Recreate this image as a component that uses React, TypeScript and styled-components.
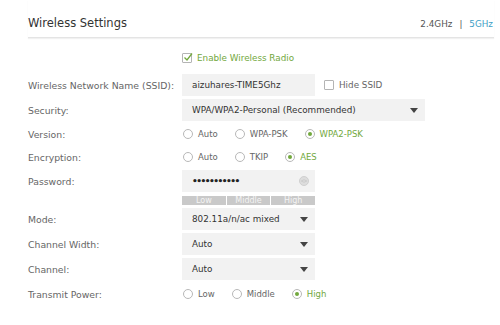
import styled, { createGlobalStyle } from 'styled-components';

const GlobalStyle = createGlobalStyle`
  html, body {
    margin: 0;
    padding: 0;
    background: #fff;
  }
  body {
    font-family: "DejaVu Sans", Verdana, sans-serif;
    color: #555;
  }
`;

const GREEN = '#72a83d';

const Page = styled.div`
  width: 500px;
  height: 325px;
  box-sizing: border-box;
  padding: 0 6px 0 28px;
  overflow: hidden;
`;

const Header = styled.div`
  display: flex;
  justify-content: space-between;
  align-items: flex-end;
  height: 38px;
  box-sizing: border-box;
  padding: 0 1px 7px 0;
  border-bottom: 1px solid #e4e4e4;
  box-shadow: 0 1px 1px #f1f1f1;
`;

const Title = styled.div`
  font-size: 11.5px;
  line-height: 14px;
  color: #333;
`;

const Bands = styled.div`
  display: flex;
  gap: 7px;
  font-size: 8.8px;
  line-height: 12px;
  color: #555;
`;

const Band = styled.span<{ $active?: boolean }>`
  color: ${p => (p.$active ? '#3d9fc6' : '#555')};
`;

const Form = styled.div`
  display: flex;
  flex-direction: column;
  gap: 3px;
  margin-top: 10px;
`;

const Row = styled.div<{ $h?: number; $mt?: number; $mb?: number }>`
  display: flex;
  align-items: center;
  height: ${p => p.$h ?? 22}px;
  margin-top: ${p => p.$mt ?? 0}px;
  margin-bottom: ${p => p.$mb ?? 0}px;
`;

const Label = styled.div`
  width: 154px;
  flex-shrink: 0;
  font-size: 9.3px;
  color: #666;
`;

const Controls = styled.div`
  display: flex;
  align-items: center;
  gap: 9px;
`;

const Field = styled.div<{ $w: number }>`
  position: relative;
  display: flex;
  align-items: center;
  width: ${p => p.$w}px;
  height: 22px;
  box-sizing: border-box;
  padding: 0 10px;
  background: #f2f2f2;
  font-size: 8.8px;
  color: #333;
`;

const Arrow = styled.span`
  position: absolute;
  right: 7px;
  top: 9px;
  width: 0;
  height: 0;
  border-left: 4px solid transparent;
  border-right: 4px solid transparent;
  border-top: 5px solid #444;
`;

const Dots = styled.span`
  font-size: 9px;
  letter-spacing: -1.5px;
  color: #222;
  font-weight: bold;
`;

const Eye = styled.span`
  position: absolute;
  right: 6px;
  top: 6px;
  width: 10px;
  height: 10px;
  border-radius: 50%;
  background: #ddd;
  border: 1px solid #d0d0d0;
  box-sizing: border-box;
  display: flex;
  align-items: center;
  justify-content: center;
`;

const Box = styled.span`
  position: relative;
  width: 10px;
  height: 10px;
  box-sizing: border-box;
  border: 1px solid #b4b4b4;
  background: #fff;
  flex-shrink: 0;
  border-radius: 1px;
`;

const Check = styled.label<{ $on?: boolean }>`
  display: flex;
  align-items: center;
  gap: 5px;
  font-size: 8.8px;
  color: ${p => (p.$on ? GREEN : '#666')};
`;

const RadioGroup = styled.div`
  display: flex;
  align-items: center;
`;

const Option = styled.label<{ $on?: boolean }>`
  display: flex;
  align-items: center;
  gap: 5px;
  margin-right: 16px;
  margin-left: 1px;
  font-size: 8.5px;
  color: ${p => (p.$on ? GREEN : '#666')};
`;

const Dot = styled.span<{ $on?: boolean }>`
  width: 10px;
  height: 10px;
  box-sizing: border-box;
  border-radius: 50%;
  border: 1px solid #b8b8b8;
  background: #fff;
  display: flex;
  align-items: center;
  justify-content: center;
  flex-shrink: 0;
  &::after {
    content: '';
    display: ${p => (p.$on ? 'block' : 'none')};
    width: 4px;
    height: 4px;
    border-radius: 50%;
    background: ${GREEN};
  }
`;

const Strength = styled.div`
  display: flex;
  width: 133px;
  height: 9px;
  gap: 1px;
`;

const Level = styled.div`
  flex: 1;
  background: #c9c9c9;
  color: #f4f4f4;
  font-size: 8px;
  line-height: 9px;
  text-align: center;
`;

const Radios = ({ items, on }: { items: string[]; on: string }) => (
  <RadioGroup>
    {items.map(i => (
      <Option key={i} $on={i === on}>
        <Dot $on={i === on} />
        {i}
      </Option>
    ))}
  </RadioGroup>
);

const Select = ({ w, value }: { w: number; value: string }) => (
  <Field $w={w}>
    {value}
    <Arrow />
  </Field>
);

export default function App() {
  return (
    <>
      <GlobalStyle />
      <Page>
        <Header>
          <Title>Wireless Settings</Title>
          <Bands>
            <Band>2.4GHz</Band>
            <Band>|</Band>
            <Band $active>5GHz</Band>
          </Bands>
        </Header>
        <Form>
          <Row $h={20} $mb={3}>
            <Label />
            <Check $on>
              <Box>
                <svg width="10" height="10" viewBox="0 0 10 10" style={{ position: 'absolute', left: 0, top: -2 }}>
                  <path d="M1.5 5.5 L4 8 L9 1.5" fill="none" stroke={GREEN} strokeWidth="1.3" />
                </svg>
              </Box>
              Enable Wireless Radio
            </Check>
          </Row>
          <Row>
            <Label>Wireless Network Name (SSID):</Label>
            <Controls>
              <Field $w={133}>aizuhares-TIME5Ghz</Field>
              <Check>
                <Box />
                Hide SSID
              </Check>
            </Controls>
          </Row>
          <Row>
            <Label>Security:</Label>
            <Select w={243} value="WPA/WPA2-Personal (Recommended)" />
          </Row>
          <Row $h={20}>
            <Label>Version:</Label>
            <Radios items={['Auto', 'WPA-PSK', 'WPA2-PSK']} on="WPA2-PSK" />
          </Row>
          <Row $h={20}>
            <Label>Encryption:</Label>
            <Radios items={['Auto', 'TKIP', 'AES']} on="AES" />
          </Row>
          <Row>
            <Label>Password:</Label>
            <Field $w={133}>
              <Dots>•••••••••••</Dots>
              <Eye>
                <svg width="6" height="4" viewBox="0 0 6 4">
                  <path d="M0.3 2 Q3 -0.6 5.7 2 Q3 4.6 0.3 2 Z" fill="none" stroke="#c4c4c4" strokeWidth="0.7" />
                </svg>
              </Eye>
            </Field>
          </Row>
          <Row $h={9} $mt={1}>
            <Label />
            <Strength>
              <Level>Low</Level>
              <Level>Middle</Level>
              <Level>High</Level>
            </Strength>
          </Row>
          <Row>
            <Label>Mode:</Label>
            <Select w={133} value="802.11a/n/ac mixed" />
          </Row>
          <Row>
            <Label>Channel Width:</Label>
            <Select w={133} value="Auto" />
          </Row>
          <Row>
            <Label>Channel:</Label>
            <Select w={133} value="Auto" />
          </Row>
          <Row>
            <Label>Transmit Power:</Label>
            <Radios items={['Low', 'Middle', 'High']} on="High" />
          </Row>
        </Form>
      </Page>
    </>
  );
}
